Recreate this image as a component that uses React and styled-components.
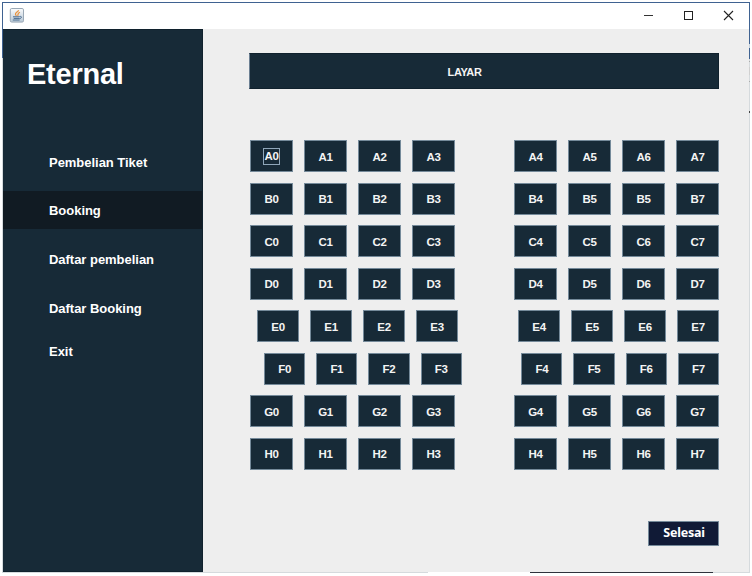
import React from "react";
import styled, { createGlobalStyle } from "styled-components";

const GlobalStyle = createGlobalStyle`
  * { box-sizing: border-box; }
  body { margin: 0; background: #fff; overflow: hidden; }
`;

const Desktop = styled.div`
  position: relative;
  width: 752px;
  height: 576px;
  padding: 2px 2px 3px 2px;
  overflow: hidden;
  background: #fff;
  font-family: "Liberation Sans", Arial, sans-serif;
`;

const Frame = styled.div`
  width: 748px;
  height: 571px;
  padding: 1px;
  display: flex;
  flex-direction: column;
  background: linear-gradient(#3f6291 0 56px, #d5dadd 56px);
`;

const TitleBar = styled.header`
  height: 26px;
  flex: none;
  display: flex;
  align-items: center;
  justify-content: space-between;
  padding: 0 15px 0 6px;
  background: #fff;
`;

const WindowControls = styled.div`
  display: flex;
  gap: 29px;
  margin-top: -1px;
  svg { display: block; }
`;

const Body = styled.div`
  flex: 1;
  display: flex;
  background: #eee;
`;

const Sidebar = styled.nav`
  width: 200px;
  display: flex;
  flex-direction: column;
  background: #172a37;
  border: 1px solid #10212d;
  border-width: 1px 1px 1px 0;
  color: #fff;
  font-weight: bold;
`;

const Brand = styled.h1`
  margin: 26px 0 64px 24px;
  height: 36px;
  font-size: 29px;
  line-height: 36px;
  letter-spacing: -0.25px;
`;

const MenuItem = styled.a`
  height: ${(p) => p.$height || 38}px;
  margin-bottom: ${(p) => p.$gap ?? 10.6}px;
  display: flex;
  align-items: center;
  padding: 1px 0 0 46px;
  font-size: 13px;
  letter-spacing: -0.03px;
  background: ${(p) => (p.$active ? "#111b23" : "transparent")};
`;

const Content = styled.main`
  flex: 1;
  display: flex;
  flex-direction: column;
  padding: 24px 30px 0 46px;
`;

const Screen = styled.div`
  width: 470px;
  height: 36px;
  display: flex;
  align-items: center;
  justify-content: center;
  padding-right: 39px;
  padding-top: 1px;
  background: #172a37;
  border: 1px solid #10212d;
  border-left-color: #6c8093;
  color: #f4f4f4;
  font-size: 11px;
  font-weight: bold;
  letter-spacing: -0.4px;
`;

const Seats = styled.section`
  width: 469px;
  margin: 51px 0 0 1px;
  display: flex;
  flex-direction: column;
  gap: 10.5px;
`;

const SeatRow = styled.div`
  display: flex;
  justify-content: space-between;
  height: 32px;
  padding-left: ${(p) => p.$indent}px;
`;

const SeatBlock = styled.div`
  display: flex;
  gap: 11px;
`;

const Seat = styled.button`
  width: ${(p) => p.$width}px;
  height: 32px;
  padding: 1px 0 0;
  display: flex;
  align-items: center;
  justify-content: center;
  background: #172a37;
  border: 1px solid #758a9a;
  color: #f4f4f4;
  font: bold 11.5px "Liberation Sans", Arial, sans-serif;
  letter-spacing: -0.35px;
`;

const FocusRing = styled.span`
  outline: 1px solid #8fa6b9;
  outline-offset: -0.5px;
  line-height: 15px;
`;

const Finish = styled.button`
  align-self: flex-end;
  width: 71px;
  height: 25px;
  margin-top: 51px;
  padding: 0 0 1px 1px;
  display: flex;
  align-items: center;
  justify-content: center;
  background: #101a36;
  border: 1px solid #758a9a;
  color: #fff;
  font: bold 12.5px "Noto Sans", Tahoma, sans-serif;
  letter-spacing: -0.25px;
`;

const Backdrop = styled.div`
  position: absolute;
  background: ${(p) => p.$color};
  left: ${(p) => p.$x}px;
  top: ${(p) => p.$y}px;
  width: ${(p) => p.$w}px;
  height: ${(p) => p.$h}px;
`;

const backdrop = [
  ["#3f6291", 749, 2, 1, 42],
  ["#c5d3e0", 749, 44, 1, 4],
  ["#3f6291", 749, 48, 1, 11],
  ["#aaa", 749, 61, 1, 1],
  ["#d0d0d0", 749, 67, 1, 8],
  ["#aaa", 749, 81, 1, 1],
  ["#444", 749, 111, 1, 2],
  ["#2e323c", 530, 572, 183, 1],
  ["#fff", 428, 572, 102, 1],
];

const rows = [
  { l: "A", indent: 0, width: 43 },
  { l: "B", indent: 0, width: 43 },
  { l: "C", indent: 0, width: 43 },
  { l: "D", indent: 0, width: 43 },
  { l: "E", indent: 7, width: 42 },
  { l: "F", indent: 14, width: 41.2 },
  { l: "G", indent: 0, width: 43 },
  { l: "H", indent: 0, width: 43 },
];

const seatLabel = (l, n) => (l === "B" && n === 6 ? "B5" : l + n);

const JavaIcon = () => (
  <svg width="16" height="16" viewBox="0 0 16 16">
    <defs>
      <linearGradient id="tile" x2="0" y2="1">
        <stop stopColor="#fbfcfd" />
        <stop offset="1" stopColor="#b7c7d5" />
      </linearGradient>
    </defs>
    <rect x="1.3" y="0.5" width="13.2" height="13.6" rx="1.4" fill="url(#tile)" stroke="#9aa8b5" />
    <path d="M9.6 2.3C9 4 5.9 4.6 6.5 6.5c.2.6.7.9.9 1.5M11 4.2C8 5.2 9.6 6.4 8.6 7.8" fill="none" stroke="#e8923e" strokeWidth="1.2" />
    <path d="M4 8.8h6.6M4.7 10.4h5.3M3.8 12h6.8M10.6 8.5c2.8-.5 2.3 1.9-.4 2.2" fill="none" stroke="#4a6c90" strokeWidth="1" />
  </svg>
);

export default function App() {
  return (
    <Desktop>
      <GlobalStyle />
      <Frame>
        <TitleBar>
          <JavaIcon />
          <WindowControls>
            <svg width="11" height="11" viewBox="0 0 11 11"><path d="M1 5.5h9" stroke="#333" /></svg>
            <svg width="11" height="11" viewBox="0 0 11 11"><rect x="1.5" y="1.5" width="8" height="8" fill="none" stroke="#222" /></svg>
            <svg width="11" height="11" viewBox="0 0 11 11"><path d="M1 1l9 9M10 1l-9 9" stroke="#222" strokeWidth="1.1" /></svg>
          </WindowControls>
        </TitleBar>
        <Body>
          <Sidebar>
            <Brand>Eternal</Brand>
            <MenuItem $height={12} $gap={23.4}>Pembelian Tiket</MenuItem>
            <MenuItem $active>Booking</MenuItem>
            <MenuItem>Daftar pembelian</MenuItem>
            <MenuItem $gap={5}>Daftar Booking</MenuItem>
            <MenuItem>Exit</MenuItem>
          </Sidebar>
          <Content>
            <Screen>LAYAR</Screen>
            <Seats>
              {rows.map(({ l, indent, width }) => (
                <SeatRow key={l} $indent={indent}>
                  {[0, 4].map((start) => (
                    <SeatBlock key={start}>
                      {[0, 1, 2, 3].map((i) => (
                        <Seat key={i} $width={width}>
                          {l === "A" && start + i === 0 ? <FocusRing>A0</FocusRing> : seatLabel(l, start + i)}
                        </Seat>
                      ))}
                    </SeatBlock>
                  ))}
                </SeatRow>
              ))}
            </Seats>
            <Finish>Selesai</Finish>
          </Content>
        </Body>
      </Frame>
      {backdrop.map(([c, x, y, w, h], i) => (
        <Backdrop key={i} $color={c} $x={x} $y={y} $w={w} $h={h} />
      ))}
    </Desktop>
  );
}
